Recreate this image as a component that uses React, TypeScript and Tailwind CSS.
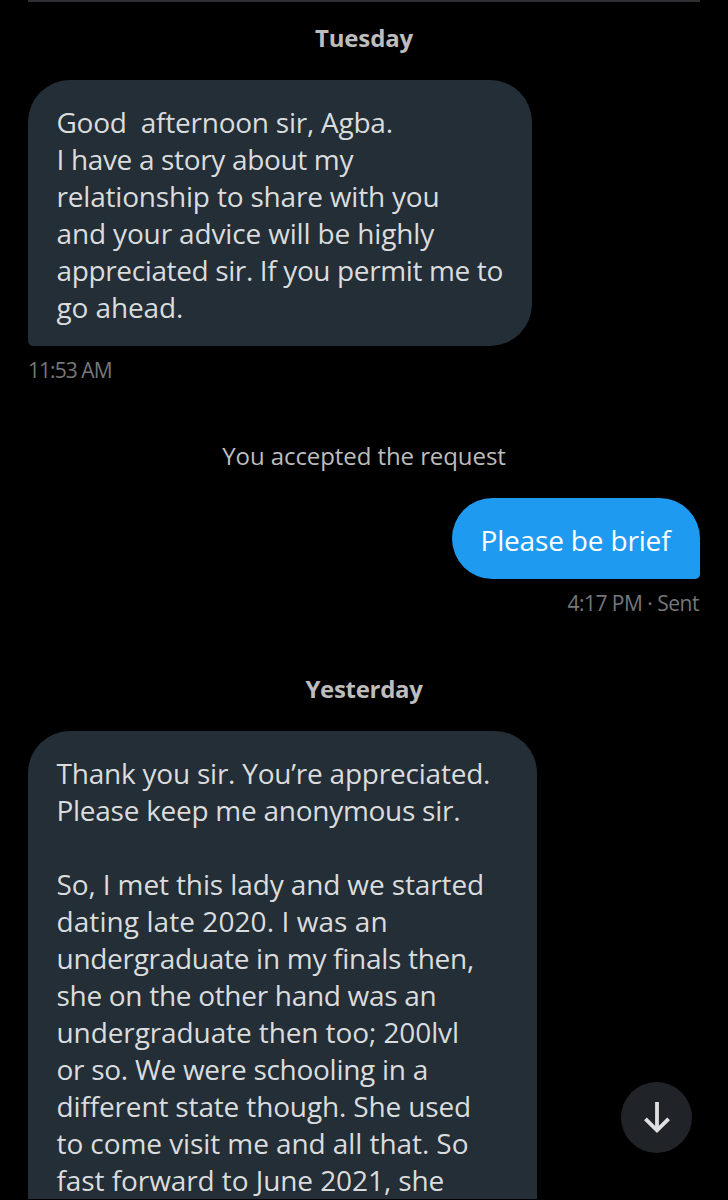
import clsx from 'clsx';

interface Line {
  text: string;
  tracking?: string;
}

const firstMessage: Line[] = [
  { text: 'Good  afternoon sir, Agba.', tracking: 'tracking-[-0.24px]' },
  { text: 'I have a story about my', tracking: 'tracking-[-0.34px]' },
  { text: 'relationship to share with you', tracking: 'tracking-[-0.19px]' },
  { text: 'and your advice will be highly', tracking: 'tracking-[-0.15px]' },
  { text: 'appreciated sir. If you permit me to', tracking: 'tracking-[-0.37px]' },
  { text: 'go ahead.', tracking: 'tracking-[-0.12px]' },
];

const secondMessage: Line[] = [
  { text: 'Thank you sir. You’re appreciated.', tracking: 'tracking-[-0.22px]' },
  { text: 'Please keep me anonymous sir.', tracking: 'tracking-[-0.27px]' },
  { text: '' },
  { text: 'So, I met this lady and we started', tracking: 'tracking-[-0.12px]' },
  { text: 'dating late 2020. I was an', tracking: 'tracking-[0.07px]' },
  { text: 'undergraduate in my finals then,', tracking: 'tracking-[-0.29px]' },
  { text: 'she on the other hand was an', tracking: 'tracking-[-0.3px]' },
  { text: 'undergraduate then too; 200lvl', tracking: 'tracking-[-0.1px]' },
  { text: 'or so. We were schooling in a', tracking: 'tracking-[-0.28px]' },
  { text: 'different state though. She used', tracking: 'tracking-[-0.15px]' },
  { text: 'to come visit me and all that. So', tracking: 'tracking-[-0.08px]' },
  { text: 'fast forward to June 2021, she', tracking: 'tracking-[-0.08px]' },
];

const MessageText = ({ lines }: { lines: Line[] }) => (
  <>
    {lines.map((line, i) => (
      <p key={i} className={clsx('h-[37px] whitespace-pre', line.tracking)}>
        {line.text}
      </p>
    ))}
  </>
);

const App = () => {
  return (
    <div className="relative flex h-[1200px] w-full flex-col overflow-hidden bg-black px-7 pb-px font-['Open_Sans',sans-serif] text-[#dadcde]">
      <div className="h-0.5 shrink-0 bg-[#2f3134]" />

      <h2 className="mt-5 text-center text-2xl leading-8 font-bold tracking-[-0.15px] text-[#bdbdbd]">Tuesday</h2>

      <div className="mt-[26px] w-[504px] shrink-0 rounded-[42px] rounded-bl-[5px] bg-[#242e36] pt-6 pb-5 pl-[28.5px] text-[28px] leading-[37px]">
        <MessageText lines={firstMessage} />
      </div>
      <span className="mt-2.5 text-[21px] leading-7 tracking-[-0.95px] text-[#75777a]">11:53 AM</span>

      <p className="mt-14 text-center text-2xl leading-8 tracking-[-0.08px] text-[#bdbdbd]">You accepted the request</p>

      <div className="mt-[26px] w-[248px] shrink-0 self-end rounded-[42px] rounded-br-[5px] bg-[#1e9bf1] pt-6 pb-5 pl-[28.5px] text-[28px] leading-[37px] tracking-[-0.17px] whitespace-nowrap text-white">
        Please be brief
      </div>
      <span className="mt-2.5 mr-px self-end text-[21px] leading-7 tracking-[-0.5px] text-[#75777a]">
        4:17 PM · Sent
      </span>

      <h2 className="mt-14 text-center text-2xl leading-8 font-bold tracking-[-0.3px] text-[#bdbdbd]">
        Yesterday
      </h2>

      <div className="mt-[26px] min-h-0 w-[509px] flex-1 overflow-hidden rounded-t-[42px] bg-[#242e36] pt-6 pl-[28.5px] text-[28px] leading-[37px]">
        <MessageText lines={secondMessage} />
      </div>

      <button
        aria-label="Scroll to bottom"
        className="absolute right-9 bottom-[47px] flex size-[71px] items-center justify-center rounded-full bg-[#202428]"
      >
        <svg width="30" height="34" viewBox="0 0 30 34" fill="none" stroke="#dfe0e1" strokeWidth="3.8">
          <path d="M15 1v29" />
          <path d="M3.4 17.8 15 29.4l11.6-11.6" />
        </svg>
      </button>
    </div>
  );
};

export default App;
